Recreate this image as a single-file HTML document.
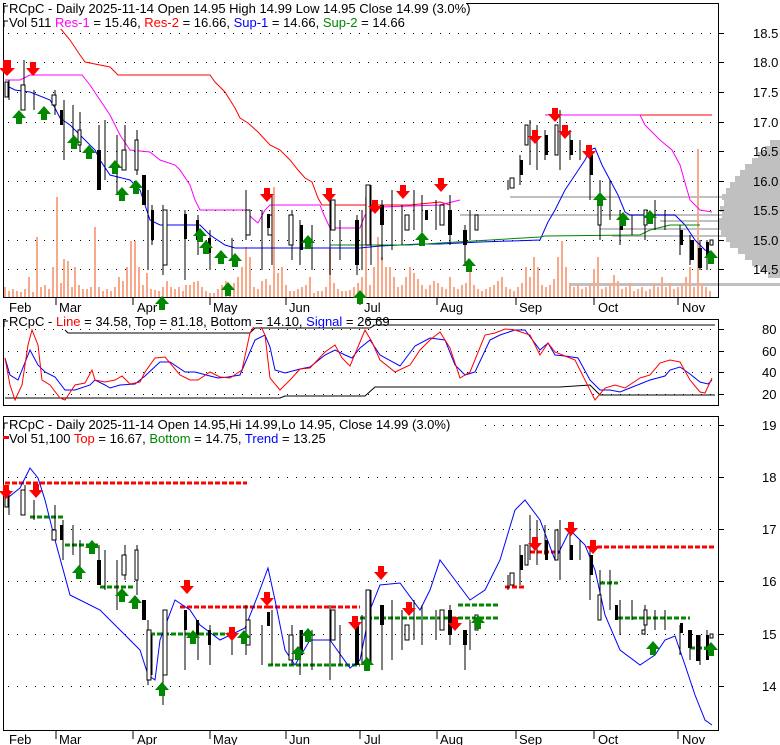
<!DOCTYPE html>
<html><head><meta charset="utf-8"><style>
html,body{margin:0;padding:0;background:#fff;}
svg{display:block;font-family:"Liberation Sans",sans-serif;}
</style></head><body>
<svg width="780" height="745" viewBox="0 0 780 745" xmlns="http://www.w3.org/2000/svg">
<rect width="780" height="745" fill="#fff"/>
<!-- volume profile -->
<g fill="#c0c0c0">
<rect x="770" y="140" width="10" height="6"/>
<rect x="765" y="146" width="15" height="6"/>
<rect x="758" y="152" width="22" height="6"/>
<rect x="752" y="158" width="28" height="6"/>
<rect x="745" y="164" width="35" height="6"/>
<rect x="740" y="170" width="40" height="6"/>
<rect x="735" y="176" width="45" height="6"/>
<rect x="730" y="182" width="50" height="6"/>
<rect x="726" y="188" width="54" height="6"/>
<rect x="722" y="194" width="58" height="6"/>
<rect x="724" y="200" width="56" height="6"/>
<rect x="720" y="206" width="60" height="6"/>
<rect x="722" y="212" width="58" height="6"/>
<rect x="719" y="218" width="61" height="6"/>
<rect x="719" y="224" width="61" height="6"/>
<rect x="721" y="230" width="59" height="6"/>
<rect x="726" y="236" width="54" height="6"/>
<rect x="730" y="242" width="50" height="6"/>
<rect x="738" y="248" width="42" height="6"/>
<rect x="745" y="254" width="35" height="6"/>
<rect x="752" y="260" width="28" height="6"/>
<rect x="760" y="266" width="20" height="6"/>
<rect x="768" y="272" width="12" height="6"/>
<rect x="570" y="283" width="210" height="3"/>
<rect x="612" y="235" width="120" height="2"/>
<rect x="510" y="196" width="230" height="2"/>
<rect x="460" y="214" width="280" height="2"/>
<rect x="600" y="228" width="130" height="2"/>
<rect x="660" y="220" width="70" height="2"/>
</g>
<rect x="720" y="28" width="60" height="16" fill="#fff"/>
<!-- panel frames -->
<g fill="none" stroke="#000" stroke-width="1">
<rect x="3.5" y="3.5" width="715" height="294"/>
<rect x="3.5" y="319.5" width="715" height="86"/>
<rect x="3.5" y="416.5" width="715" height="314"/>
</g>
<!-- grids -->
<g stroke="#000" stroke-dasharray="1,8" stroke-width="1">
<path d="M8 33.5H719M8 62.5H719M8 92.5H719M8 122.5H719M8 151.5H719M8 181.5H719M8 210.5H719M8 240.5H719M8 269.5H719"/>
<path d="M8 329.5H719M8 351.5H719M8 372.5H719M8 394.5H719"/>
<path d="M8 425.5H719M8 477.5H719M8 529.5H719M8 581.5H719M8 634.5H719M8 686.5H719"/>
</g>
<g stroke="#000"><path d="M719 33.5h5M719 62.5h5M719 92.5h5M719 122.5h5M719 151.5h5M719 181.5h5M719 210.5h5M719 240.5h5M719 269.5h5M719 329.5h5M719 351.5h5M719 372.5h5M719 394.5h5M719 425.5h5M719 477.5h5M719 529.5h5M719 581.5h5M719 634.5h5M719 686.5h5"/></g>
<!-- right labels -->
<g font-size="13" fill="#000">
<text x="753" y="38">18.5</text><text x="753" y="67">18.0</text><text x="753" y="97">17.5</text><text x="753" y="127">17.0</text><text x="753" y="156">16.5</text><text x="753" y="186">16.0</text><text x="753" y="215">15.5</text><text x="753" y="245">15.0</text><text x="753" y="274">14.5</text>
<text x="762" y="334">80</text><text x="762" y="356">60</text><text x="762" y="377">40</text><text x="762" y="399">20</text>
<text x="762" y="430">19</text><text x="762" y="482">18</text><text x="762" y="534">17</text><text x="762" y="586">16</text><text x="762" y="639">15</text><text x="762" y="691">14</text>
</g>
<!-- month labels -->
<g font-size="13" fill="#000">
<text x="9" y="312">Feb</text><text x="59" y="312">Mar</text><text x="137" y="312">Apr</text><text x="213" y="312">May</text><text x="289" y="312">Jun</text><text x="364" y="312">Jul</text><text x="440" y="312">Aug</text><text x="519" y="312">Sep</text><text x="598" y="312">Oct</text><text x="682" y="312">Nov</text>
<text x="9" y="744">Feb</text><text x="59" y="744">Mar</text><text x="137" y="744">Apr</text><text x="213" y="744">May</text><text x="289" y="744">Jun</text><text x="364" y="744">Jul</text><text x="440" y="744">Aug</text><text x="519" y="744">Sep</text><text x="598" y="744">Oct</text><text x="682" y="744">Nov</text>
</g>
<g stroke="#000"><path d="M56 297v8M133 297v8M210 297v8M286 297v8M360 297v8M437 297v8M516 297v8M594 297v8M678 297v8M56 731v8M133 731v8M210 731v8M286 731v8M360 731v8M437 731v8M516 731v8M594 731v8M678 731v8"/></g>
<!-- volume bars -->
<g stroke="#f9a88a" stroke-width="2">
<path d="M5 297v-10M9 297v-6M13 297v-8M17 297v-6M21 297v-5M25 297v-8M29 297v-20M33 297v-5M37 297v-60M41 297v-10M45 297v-12M49 297v-8M53 297v-30M57 297v-100M61 297v-14M64 297v-38M68 297v-36M72 297v-10M75 297v-30M79 297v-12M83 297v-8M87 297v-8M91 297v-10M95 297v-70M99 297v-10M103 297v-6M107 297v-8M111 297v-6M115 297v-10M119 297v-20M123 297v-16M127 297v-30M131 297v-56M135 297v-56M139 297v-30M143 297v-12M147 297v-24M151 297v-8M155 297v-7M159 297v-6M163 297v-10M167 297v-16M171 297v-10M175 297v-8M179 297v-10M183 297v-6M186 297v-12M190 297v-12M194 297v-15M198 297v-16M202 297v-10M206 297v-6M210 297v-4M214 297v-4M218 297v-8M222 297v-12M226 297v-16M230 297v-8M234 297v-14M238 297v-20M242 297v-30M246 297v-50M250 297v-40M254 297v-10M258 297v-8M262 297v-16M266 297v-18M270 297v-12M274 297v-110M278 297v-24M282 297v-30M286 297v-12M290 297v-6M294 297v-6M298 297v-8M302 297v-10M306 297v-12M310 297v-20M314 297v-4M318 297v-6M322 297v-6M326 297v-10M330 297v-48M334 297v-14M338 297v-8M342 297v-6M346 297v-6M350 297v-7M354 297v-10M358 297v-14M362 297v-20M366 297v-100M370 297v-12M374 297v-30M378 297v-60M382 297v-40M386 297v-30M390 297v-30M394 297v-20M398 297v-10M402 297v-12M406 297v-20M410 297v-30M414 297v-24M418 297v-18M422 297v-12M426 297v-8M430 297v-12M434 297v-16M438 297v-14M442 297v-10M446 297v-8M450 297v-20M454 297v-10M458 297v-8M462 297v-12M466 297v-14M470 297v-30M474 297v-12M478 297v-8M482 297v-6M486 297v-8M490 297v-10M494 297v-12M498 297v-16M502 297v-20M506 297v-10M510 297v-8M514 297v-6M518 297v-10M522 297v-14M526 297v-30M530 297v-20M534 297v-40M538 297v-30M542 297v-12M546 297v-10M550 297v-12M554 297v-18M558 297v-40M562 297v-56M566 297v-30M570 297v-14M574 297v-10M578 297v-12M582 297v-8M586 297v-10M590 297v-12M594 297v-28M598 297v-40M602 297v-8M606 297v-10M610 297v-14M614 297v-22M618 297v-16M622 297v-8M626 297v-10M630 297v-14M634 297v-6M638 297v-8M642 297v-10M646 297v-6M650 297v-8M654 297v-14M658 297v-10M662 297v-20M666 297v-10M670 297v-14M674 297v-8M678 297v-10M682 297v-12M686 297v-20M690 297v-30M694 297v-10M698 297v-148M702 297v-14M706 297v-10M710 297v-6"/>
</g>
<!-- panel1 lines -->
<polyline fill="none" stroke="#f00" stroke-width="1" points="40,28 60,28 70,40 80,55 85,62 100,65 110,67 118,75 210,75 215,82 225,92 235,108 240,118 248,123 258,132 270,145 280,150 290,160 298,170 305,178 312,182 318,198 322,205 410,205 440,202 450,205"/>
<polyline fill="none" stroke="#f00" stroke-width="1" points="640,115 712,115"/>
<polyline fill="none" stroke="#f0f" stroke-width="1" points="5,80 20,80 30,75 82,75 90,85 100,100 110,115 120,135 130,150 150,152 160,160 175,165 180,170 190,185 195,200 200,210 245,210 252,218 258,223 265,210 270,205 320,205 324,215 330,228 360,228 365,215 370,212 380,207 440,205 460,200"/>
<polyline fill="none" stroke="#f0f" stroke-width="1" points="545,115 640,115 645,125 660,140 672,150 680,165 690,200 700,210 712,212"/>
<polyline fill="none" stroke="#00f" stroke-width="1" points="5,85 15,90 30,92 50,100 55,108 60,118 70,125 80,135 95,150 100,160 110,175 130,180 140,190 145,205 150,220 160,225 200,225 210,235 225,245 235,248 290,248 320,248 360,248 380,246 400,245 420,244 440,244 460,243 480,242 540,240 548,222 555,210 565,190 575,175 585,160 590,150 595,148 602,165 610,180 618,195 625,212 630,215 650,215 675,215 685,225 695,240 705,250 712,252"/>
<polyline fill="none" stroke="#080" stroke-width="1" points="330,245 410,245 440,243 540,237 545,236 640,235 650,230 670,225 700,225"/>
<!-- candles panel1 (simplified) -->
<g stroke="#000" stroke-width="1" fill="#fff">
<path d="M9 80v20M24 60v45M34 90v20M55 90v25M64 100v60M73 105v40M80 112v40M99 125v55M105 120v60M117 135v60M125 125v35M137 130v45M148 190v80M152 205v40M163 205v70M185 210v70M198 215v40M210 230v40M232 238v20M246 190v50M262 210v60M272 195v70M292 210v50M300 220v45M312 225v45M330 195v80M340 220v40M357 215v60M362 210v60M371 185v80M382 200v60M392 190v60M402 205v40M414 190v40M422 195v40M436 200v30M450 195v50M465 225v40M470 210v30M508 180v10M520 155v30M530 120v45M537 125v45M545 130v30M560 110v60M570 130v30M580 140v20M590 150v50M600 180v60M610 180v40M620 210v35M632 215v20M645 210v30M655 200v30M665 210v20M680 225v30M690 235v30M700 240v30M707 240v30"/>
<rect x="5" y="82" width="3" height="15"/><rect x="21" y="85" width="4" height="25"/><rect x="52" y="95" width="4" height="10"/><rect x="78" y="130" width="3" height="15"/><rect x="122" y="150" width="4" height="20"/><rect x="135" y="140" width="3" height="30"/><rect x="163" y="210" width="4" height="55"/><rect x="246" y="210" width="4" height="25"/><rect x="268" y="215" width="4" height="20"/><rect x="289" y="215" width="4" height="30"/><rect x="331" y="200" width="4" height="30"/><rect x="366" y="185" width="4" height="60"/><rect x="405" y="215" width="4" height="15"/><rect x="440" y="205" width="4" height="20"/><rect x="475" y="215" width="3" height="15"/><rect x="510" y="178" width="4" height="10"/><rect x="525" y="125" width="3" height="20"/><rect x="555" y="125" width="3" height="30"/><rect x="598" y="195" width="3" height="30"/><rect x="644" y="210" width="3" height="15"/><rect x="710" y="240" width="3" height="5"/>
</g>
<g fill="#000">
<rect x="60" y="110" width="3" height="15"/><rect x="97" y="150" width="4" height="40"/><rect x="142" y="175" width="4" height="30"/><rect x="151" y="210" width="3" height="30"/><rect x="184" y="214" width="3" height="25"/><rect x="196" y="220" width="3" height="20"/><rect x="208" y="238" width="3" height="15"/><rect x="267" y="214" width="3" height="14"/><rect x="300" y="225" width="3" height="25"/><rect x="355" y="220" width="4" height="45"/><rect x="380" y="205" width="4" height="20"/><rect x="425" y="210" width="3" height="10"/><rect x="448" y="210" width="4" height="25"/><rect x="463" y="230" width="4" height="15"/><rect x="520" y="160" width="3" height="15"/><rect x="545" y="135" width="3" height="20"/><rect x="570" y="140" width="3" height="15"/><rect x="590" y="155" width="3" height="20"/><rect x="620" y="215" width="3" height="15"/><rect x="680" y="230" width="3" height="15"/><rect x="690" y="240" width="4" height="20"/><rect x="698" y="248" width="4" height="20"/><rect x="706" y="242" width="3" height="15"/>
</g>
<!-- arrows panel1 -->
<g fill="#f00">
<path d="M3 60h8v8h4l-8 8-8-8h4z"/><path d="M30 62h6v6h4l-7 8-7-8h4z"/><path d="M264 188h6v6h4l-7 8-7-8h4z"/><path d="M326 188h6v6h4l-7 8-7-8h4z"/><path d="M372 200h6v6h4l-7 8-7-8h4z"/><path d="M400 185h6v6h4l-7 8-7-8h4z"/><path d="M438 178h6v6h4l-7 8-7-8h4z"/><path d="M532 130h6v6h4l-7 8-7-8h4z"/><path d="M552 108h6v6h4l-7 8-7-8h4z"/><path d="M562 125h6v6h4l-7 8-7-8h4z"/><path d="M586 145h6v6h4l-7 8-7-8h4z"/>
</g>
<g fill="#080">
<path d="M19 110l7 8h-4v6h-6v-6h-4z"/><path d="M44 106l7 8h-4v6h-6v-6h-4z"/><path d="M74 135l7 8h-4v6h-6v-6h-4z"/><path d="M89 145l7 8h-4v6h-6v-6h-4z"/><path d="M115 160l7 8h-4v6h-6v-6h-4z"/><path d="M122 187l7 8h-4v6h-6v-6h-4z"/><path d="M136 180l7 8h-4v6h-6v-6h-4z"/><path d="M162 296l7 8h-4v6h-6v-6h-4z"/><path d="M200 228l7 8h-4v6h-6v-6h-4z"/><path d="M206 240l7 8h-4v6h-6v-6h-4z"/><path d="M221 250l7 8h-4v6h-6v-6h-4z"/><path d="M235 253l7 8h-4v6h-6v-6h-4z"/><path d="M228 282l7 8h-4v6h-6v-6h-4z"/><path d="M308 235l7 8h-4v6h-6v-6h-4z"/><path d="M360 290l7 8h-4v6h-6v-6h-4z"/><path d="M422 232l7 8h-4v6h-6v-6h-4z"/><path d="M469 258l7 8h-4v6h-6v-6h-4z"/><path d="M600 192l7 8h-4v6h-6v-6h-4z"/><path d="M623 212l7 8h-4v6h-6v-6h-4z"/><path d="M650 210l7 8h-4v6h-6v-6h-4z"/><path d="M711 250l7 8h-4v6h-6v-6h-4z"/>
</g>
<!-- panel1 legend -->
<rect x="6" y="2" width="460" height="14" fill="#fff"/>
<rect x="6" y="16" width="360" height="13" fill="#fff"/>
<g font-size="13">
<path d="M4 13V6h4M4 27v-6h4" stroke="#000" fill="none"/>
<text x="9" y="13" fill="#000">RCpC - Daily 2025-11-14 Open 14.95  High 14.99  Low 14.95  Close 14.99 (3.0%)</text>
<text x="9" y="27"><tspan fill="#000">Vol 511 </tspan><tspan fill="#f0f">Res-1</tspan><tspan fill="#000"> = 15.46, </tspan><tspan fill="#f00">Res-2</tspan><tspan fill="#000"> = 16.66, </tspan><tspan fill="#00f">Sup-1</tspan><tspan fill="#000"> = 14.66, </tspan><tspan fill="#080">Sup-2</tspan><tspan fill="#000"> = 14.66</tspan></text>
</g>
<!-- panel2 -->
<polyline fill="none" stroke="#000" points="65,330 68,333 250,333 255,328 370,328 375,325 715,325"/>
<polyline fill="none" stroke="#000" points="5,398 280,398 285,396 365,396 375,387 560,387 590,385 600,395 715,395"/>
<polyline fill="none" stroke="#00f" points="5,358 10,375 18,380 30,350 38,365 45,372 55,377 65,390 75,390 90,385 95,380 105,385 110,388 120,385 135,384 145,376 160,362 170,362 185,372 195,372 210,376 218,378 228,377 240,375 255,340 265,335 270,347 275,370 285,373 300,369 310,367 325,355 335,350 345,355 352,358 360,348 370,340 380,355 400,366 415,346 430,338 445,340 455,365 465,375 475,372 490,340 500,335 515,330 525,330 540,350 548,343 555,355 565,356 578,358 590,380 600,390 610,390 620,392 630,388 640,384 650,380 665,376 670,370 680,367 690,374 700,382 708,384 712,380"/>
<polyline fill="none" stroke="#f00" points="5,358 10,385 15,400 22,385 28,345 32,330 38,345 42,380 50,385 60,398 65,400 75,385 85,383 92,370 95,380 105,382 115,380 122,376 130,384 140,382 145,372 155,358 165,357 180,375 190,380 198,380 210,372 220,377 230,378 242,370 250,333 258,320 265,335 270,378 280,390 290,380 300,369 310,368 325,352 335,345 342,358 350,366 360,342 365,330 372,342 380,360 395,372 410,365 420,350 430,340 440,332 450,348 460,378 470,372 485,335 495,333 505,329 515,330 530,335 540,355 548,343 555,352 565,356 575,360 590,390 595,400 605,388 615,385 625,388 640,378 650,375 660,363 670,360 680,362 690,380 700,392 705,393 712,378"/>
<rect x="6" y="315" width="360" height="12" fill="#fff"/>
<g font-size="13"><path d="M4 327v-6h4" stroke="#000" fill="none"/>
<text x="9" y="326"><tspan fill="#000">RCpC - </tspan><tspan fill="#f00">Line</tspan><tspan fill="#000"> = 34.58, Top = 81.18, Bottom = 14.10, </tspan><tspan fill="#00f">Signal</tspan><tspan fill="#000"> = 26.69</tspan></text></g>
<!-- panel3 -->
<g stroke="#f00" stroke-width="3" stroke-dasharray="5,2">
<path d="M5 483H247M180 607H270M268 607H360M530 552H560M590 547H715M505 587H525"/>
</g>
<g stroke="#080" stroke-width="3" stroke-dasharray="5,2">
<path d="M30 517H65M65 545H100M100 587H135M150 634H230M268 665H360M360 618H500M600 583H618M618 618H690M690 648H712M458 605H500"/>
</g>
<polyline fill="none" stroke="#00f" points="5,500 20,488 30,468 38,478 45,500 55,540 70,595 100,610 125,635 140,650 148,675 155,680 160,640 175,600 190,610 200,625 220,640 245,628 258,595 268,568 275,600 285,650 295,665 310,640 330,640 350,668 360,660 370,610 380,585 400,583 420,610 430,590 440,560 455,580 470,600 485,590 500,560 515,510 525,500 540,520 555,560 570,530 585,545 595,570 605,615 620,650 640,665 655,655 665,640 675,636 685,665 695,695 705,720 712,725"/>
<g stroke="#000" stroke-width="1" fill="#fff">
<path d="M9 490v25M25 485v30M34 500v20M55 505v35M63 520v40M73 525v30M80 540v30M99 545v40M105 550v40M117 560v50M125 545v35M137 545v50M148 620v65M152 635v40M163 625v80M185 610v60M198 620v40M210 625v40M232 635v20M246 605v50M262 625v40M272 610v55M292 625v40M300 630v45M312 630v40M330 605v75M340 625v40M357 620v40M362 615v50M371 590v75M382 610v60M392 600v60M402 610v40M414 600v40M422 605v40M436 610v30M450 605v40M465 630v40M470 620v30M508 575v15M520 545v40M530 515v45M537 520v45M545 525v30M560 520v60M570 530v30M580 540v20M590 550v50M600 570v50M610 570v40M620 600v35M632 600v20M645 605v30M655 610v20M665 610v20M680 625v30M690 630v30M700 635v30M707 630v30"/>
<rect x="5" y="492" width="3" height="15"/><rect x="21" y="490" width="4" height="25"/><rect x="52" y="530" width="4" height="10"/><rect x="122" y="555" width="4" height="20"/><rect x="135" y="550" width="3" height="30"/><rect x="147" y="630" width="4" height="50"/><rect x="163" y="610" width="4" height="65"/><rect x="246" y="620" width="4" height="25"/><rect x="289" y="635" width="4" height="25"/><rect x="331" y="610" width="4" height="30"/><rect x="366" y="590" width="4" height="70"/><rect x="405" y="625" width="4" height="15"/><rect x="440" y="610" width="4" height="20"/><rect x="475" y="615" width="3" height="15"/><rect x="510" y="573" width="4" height="12"/><rect x="525" y="545" width="3" height="20"/><rect x="555" y="530" width="3" height="30"/><rect x="598" y="595" width="3" height="25"/><rect x="644" y="610" width="3" height="15"/><rect x="642" y="630" width="3" height="4"/><rect x="710" y="634" width="3" height="4"/>
</g>
<g fill="#000">
<rect x="60" y="525" width="3" height="15"/><rect x="97" y="560" width="4" height="25"/><rect x="142" y="600" width="4" height="20"/><rect x="184" y="610" width="3" height="20"/><rect x="196" y="620" width="3" height="15"/><rect x="208" y="630" width="3" height="15"/><rect x="267" y="612" width="3" height="14"/><rect x="300" y="630" width="3" height="25"/><rect x="355" y="625" width="4" height="40"/><rect x="380" y="605" width="4" height="20"/><rect x="448" y="610" width="4" height="25"/><rect x="463" y="630" width="4" height="15"/><rect x="520" y="555" width="3" height="15"/><rect x="545" y="540" width="3" height="20"/><rect x="570" y="545" width="3" height="15"/><rect x="590" y="555" width="3" height="20"/><rect x="615" y="605" width="3" height="15"/><rect x="680" y="623" width="3" height="10"/><rect x="688" y="630" width="4" height="18"/><rect x="696" y="635" width="4" height="26"/><rect x="706" y="635" width="3" height="25"/>
</g>
<g fill="#f00">
<path d="M3 485h6v6h4l-7 8-7-8h4z"/><path d="M33 484h6v6h4l-7 8-7-8h4z"/><path d="M184 580h6v6h4l-7 8-7-8h4z"/><path d="M229 627h6v6h4l-7 8-7-8h4z"/><path d="M264 592h6v6h4l-7 8-7-8h4z"/><path d="M352 616h6v6h4l-7 8-7-8h4z"/><path d="M378 566h6v6h4l-7 8-7-8h4z"/><path d="M406 602h6v6h4l-7 8-7-8h4z"/><path d="M452 617h6v6h4l-7 8-7-8h4z"/><path d="M532 537h6v6h4l-7 8-7-8h4z"/><path d="M568 522h6v6h4l-7 8-7-8h4z"/><path d="M590 540h6v6h4l-7 8-7-8h4z"/>
</g>
<g fill="#080">
<path d="M79 565l7 8h-4v6h-6v-6h-4z"/><path d="M92 540l7 8h-4v6h-6v-6h-4z"/><path d="M122 588l7 8h-4v6h-6v-6h-4z"/><path d="M135 595l7 8h-4v6h-6v-6h-4z"/><path d="M162 682l7 8h-4v6h-6v-6h-4z"/><path d="M193 630l7 8h-4v6h-6v-6h-4z"/><path d="M244 630l7 8h-4v6h-6v-6h-4z"/><path d="M298 646l7 8h-4v6h-6v-6h-4z"/><path d="M308 628l7 8h-4v6h-6v-6h-4z"/><path d="M367 657l7 8h-4v6h-6v-6h-4z"/><path d="M478 615l7 8h-4v6h-6v-6h-4z"/><path d="M653 641l7 8h-4v6h-6v-6h-4z"/><path d="M711 642l7 8h-4v6h-6v-6h-4z"/>
</g>
<rect x="6" y="418" width="478" height="28" fill="#fff"/>
<g font-size="13"><path d="M4 429v-6h4" stroke="#000" fill="none"/><rect x="3" y="436" width="6" height="3" fill="#f00"/>
<text x="9" y="429" fill="#000">RCpC - Daily 2025-11-14 Open 14.95,Hi 14.99,Lo 14.95, Close 14.99 (3.0%)</text>
<text x="9" y="443"><tspan fill="#000">Vol 51,100 </tspan><tspan fill="#f00">Top</tspan><tspan fill="#000"> = 16.67, </tspan><tspan fill="#080">Bottom</tspan><tspan fill="#000"> = 14.75, </tspan><tspan fill="#00f">Trend</tspan><tspan fill="#000"> = 13.25</tspan></text></g>
</svg>
</body></html>
